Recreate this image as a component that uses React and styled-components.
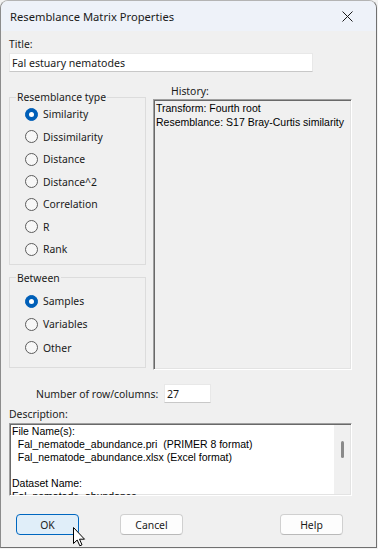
import React from 'react';
import styled, { createGlobalStyle } from 'styled-components';

const GlobalStyle = createGlobalStyle`
	body {
		margin: 0;
		background: #f2f2f2;
		font-family: "Noto Sans", "Liberation Sans", sans-serif;
		color: #1a1a1a;
	}
`;

const Window = styled.div`
	position: relative;
	width: 377px;
	height: 548px;
	box-sizing: border-box;
	border: 1px solid;
	border-color: #b4b4b4 #707070 #707070 #8c8c8c;
	border-radius: 8px 8px 0 0;
	background: #f0f0f0;
	display: flex;
	flex-direction: column;
	overflow: hidden;
	font-size: 10.4px;
	white-space: nowrap;
`;

const TitleBar = styled.div`
	height: 30px;
	flex-shrink: 0;
	display: flex;
	align-items: center;
	justify-content: space-between;
	padding-left: 9px;
	background: #eef2f9;
	font-size: 11.2px;
`;

const CloseButton = styled.div`
	width: 44px;
	height: 30px;
	display: flex;
	align-items: center;
	justify-content: center;
	margin-right: 7px;
`;

const Content = styled.div`
	flex: 1;
	display: flex;
	flex-direction: column;
	padding: 0 8px;
`;

const Label = styled.div`
	line-height: 16px;
	margin-top: ${p => p.$top || 0}px;
	padding-left: ${p => p.$indent || 0}px;
`;

const TextBox = styled.input`
	box-sizing: border-box;
	width: ${p => p.$width}px;
	height: 19px;
	margin: ${p => p.$top ?? 1}px 0 0;
	padding: 0 2px;
	border: 1px solid #e8e8e8;
	border-bottom-color: #c8c8c8;
	background: #fff;
	font: inherit;
	font-size: 10.6px;
	color: #1a1a1a;
	outline: none;
`;

const MainRow = styled.div`
	display: flex;
	gap: 7px;
	margin-top: 12px;
`;

const LeftColumn = styled.div`
	width: 137px;
	display: flex;
	flex-direction: column;
	gap: 7px;
	padding-top: 7px;
`;

const Group = styled.fieldset`
	margin: 0;
	padding: 0 0 ${p => p.$bottom}px 7px;
	border: 1px solid #dcdcdc;
	min-width: 0;

	legend {
		padding: 0 1px;
		margin-left: -1px;
		line-height: 12px;
		font-size: 10.4px;
	}
`;

const Options = styled.div`
	padding-top: ${p => p.$top || 0}px;
`;

const RadioRow = styled.div`
	height: ${p => p.$height}px;
	display: flex;
	align-items: center;
	gap: 5px;
	margin-left: 8px;
`;

const RadioDot = styled.span`
	width: 13px;
	height: 13px;
	box-sizing: border-box;
	border-radius: 50%;
	border: 1px solid ${p => (p.$checked ? '#005fb8' : '#5c5c5c')};
	background: ${p => (p.$checked ? '#005fb8' : '#f7f7f7')};
	display: flex;
	align-items: center;
	justify-content: center;

	&::after {
		content: '';
		width: 5px;
		height: 5px;
		border-radius: 50%;
		background: #fff;
		display: ${p => (p.$checked ? 'block' : 'none')};
	}
`;

const RightColumn = styled.div`
	width: 199px;
	display: flex;
	flex-direction: column;
`;

const HistoryLabel = styled.div`
	line-height: 15px;
	padding-left: 18px;
`;

const Sunken = styled.div`
	box-sizing: border-box;
	border: 1px solid;
	border-color: #a0a0a0 #fff #fff #a0a0a0;
	box-shadow: inset 1px 1px 0 #696969, inset -1px -1px 0 #e3e3e3;
	background: ${p => p.$bg};
	height: ${p => p.$height}px;
	display: flex;
	overflow: hidden;
`;

const PlainText = styled.div`
	flex: 1;
	font-family: "Liberation Sans", Arial, sans-serif;
	font-size: 10.5px;
	line-height: ${p => p.$line}px;
	padding: ${p => p.$top}px 0 0 2px;
	white-space: pre;
	color: #000;
`;

const NumberRow = styled.div`
	display: flex;
	align-items: center;
	margin-top: 14px;
	padding-left: 27px;
`;

const NumberLabel = styled.span`
	width: 128px;
`;

const ScrollTrack = styled.div`
	width: 16px;
	margin: 1px 1px 1px 0;
	background: #f0f0f0;
	display: flex;
	justify-content: center;
	padding-top: 16px;
`;

const ScrollThumb = styled.div`
	width: 3px;
	height: 17px;
	border-radius: 2px;
	background: #8a8a8a;
`;

const ButtonRow = styled.div`
	display: flex;
	margin-top: 18px;
	padding: 0 25px 0 7px;
`;

const Button = styled.div`
	width: 63px;
	height: 21px;
	box-sizing: border-box;
	display: flex;
	align-items: center;
	justify-content: center;
	border-radius: 4px;
	border: 1px solid ${p => (p.$primary ? '#0067c0' : '#d0d0d0')};
	border-bottom-color: ${p => (p.$primary ? '#0067c0' : '#b9b9b9')};
	background: ${p => (p.$primary ? '#e0eef9' : '#fdfdfd')};
	margin-left: ${p => p.$gap || '0'};
`;

const Cursor = styled.svg`
	position: absolute;
	left: 72px;
	top: 526px;
`;

const resemblanceTypes = ['Similarity', 'Dissimilarity', 'Distance', 'Distance^2', 'Correlation', 'R', 'Rank'];
const betweenTypes = ['Samples', 'Variables', 'Other'];

const history = 'Transform: Fourth root\nResemblance: S17 Bray-Curtis similarity';
const description =
	'File Name(s):\n  Fal_nematode_abundance.pri  (PRIMER 8 format)\n  Fal_nematode_abundance.xlsx (Excel format)\n\nDataset Name:\nFal_nematode_abundance';

const RadioList = ({ items, checked, height }) =>
	items.map(item => (
		<RadioRow key={item} $height={height}>
			<RadioDot $checked={item === checked} />
			{item}
		</RadioRow>
	));

export default function App() {
	return (
		<>
			<GlobalStyle />
			<Window>
				<TitleBar>
					Resemblance Matrix Properties
					<CloseButton>
						<svg width="11" height="11" viewBox="0 0 11 11">
							<path d="M0.5 0.5 L10.5 10.5 M10.5 0.5 L0.5 10.5" stroke="#1a1a1a" strokeWidth="1" />
						</svg>
					</CloseButton>
				</TitleBar>
				<Content>
					<Label $top={5}>Title:</Label>
					<TextBox $width={304} readOnly defaultValue="Fal estuary nematodes" />

					<MainRow>
						<LeftColumn>
							<Group $bottom={3}>
								<legend>Resemblance type</legend>
								<Options>
									<RadioList items={resemblanceTypes} checked="Similarity" height={22.5} />
								</Options>
							</Group>
							<Group $bottom={8}>
								<legend>Between</legend>
								<Options $top={6}>
									<RadioList items={betweenTypes} checked="Samples" height={23.3} />
								</Options>
							</Group>
						</LeftColumn>
						<RightColumn>
							<HistoryLabel>History:</HistoryLabel>
							<Sunken $bg="#f0f0f0" $height={271}>
								<PlainText $line={14.4} $top={1}>{history}</PlainText>
							</Sunken>
						</RightColumn>
					</MainRow>

					<NumberRow>
						<NumberLabel>Number of row/columns:</NumberLabel>
						<TextBox $width={47} $top={0} readOnly defaultValue="27" />
					</NumberRow>

					<Label $top={3}>Description:</Label>
					<Sunken $bg="#fff" $height={73} style={{ width: 343, marginTop: 1 }}>
						<PlainText $line={13} $top={1}>{description}</PlainText>
						<ScrollTrack>
							<ScrollThumb />
						</ScrollTrack>
					</Sunken>

					<ButtonRow>
						<Button $primary>OK</Button>
						<Button $gap="41px">Cancel</Button>
						<Button $gap="auto">Help</Button>
					</ButtonRow>
				</Content>
				<Cursor width="13" height="20" viewBox="0 0 13 20">
					<path d="M0.5 0.5 L0.5 16.5 L4.2 13 L6.8 18.8 L9 17.8 L6.5 12.2 L11.5 12.2 Z" fill="#fff" stroke="#000" strokeWidth="1" strokeLinejoin="round" />
				</Cursor>
			</Window>
		</>
	);
}
